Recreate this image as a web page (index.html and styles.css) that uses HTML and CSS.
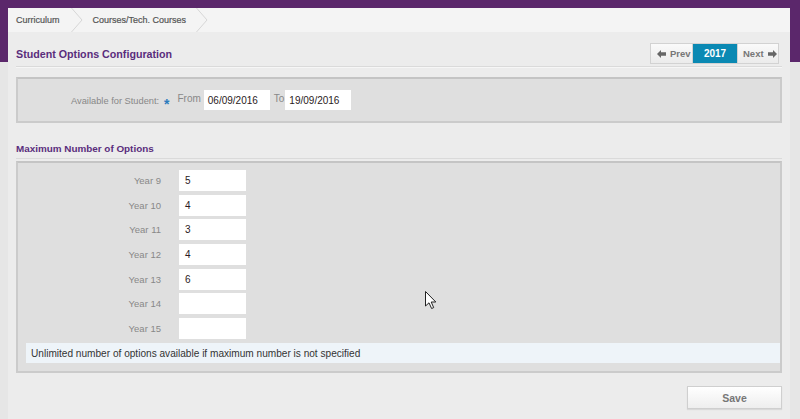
FILE: index.html
```html
<!DOCTYPE html>
<html lang="en">
<head>
<meta charset="utf-8">
<title>Student Options Configuration</title>
<link rel="stylesheet" href="styles.css">
</head>
<body>
<div class="page">
  <nav class="crumbs">
    <span class="crumb first">Curriculum</span>
    <svg class="chev" width="12" height="24" viewBox="0 0 12 24"><polyline points="0.5,0 11,12 0.5,24" fill="none" stroke="#d6d6d6" stroke-width="1"/></svg>
    <span class="crumb">Courses/Tech. Courses</span>
    <svg class="chev" width="12" height="24" viewBox="0 0 12 24"><polyline points="0.5,0 11,12 0.5,24" fill="none" stroke="#d6d6d6" stroke-width="1"/></svg>
  </nav>

  <main class="content">
    <header class="head">
      <h1 class="title">Student Options Configuration</h1>
      <div class="pager">
        <button class="pbtn prev"><svg class="arr" width="9" height="8" viewBox="0 0 9 8"><polygon points="0,4 4,0 4,2.3 9,2.3 9,5.7 4,5.7 4,8" fill="#666"/></svg>Prev</button>
        <button class="pbtn year">2017</button>
        <button class="pbtn next">Next<svg class="arr" width="9" height="8" viewBox="0 0 9 8"><polygon points="9,4 5,0 5,2.3 0,2.3 0,5.7 5,5.7 5,8" fill="#666"/></svg></button>
      </div>
    </header>

    <section class="panel avail">
      <span class="lbl avail-lbl">Available for Student:</span>
      <span class="req">*</span>
      <span class="word">From</span>
      <span class="field date">06/09/2016</span>
      <span class="word to">To</span>
      <span class="field date">19/09/2016</span>
    </section>

    <h2 class="subtitle">Maximum Number of Options</h2>

    <section class="panel maxopts">
      <div class="grid">
        <span class="lbl">Year 9</span><span class="field num">5</span>
        <span class="lbl">Year 10</span><span class="field num">4</span>
        <span class="lbl">Year 11</span><span class="field num">3</span>
        <span class="lbl">Year 12</span><span class="field num">4</span>
        <span class="lbl">Year 13</span><span class="field num">6</span>
        <span class="lbl">Year 14</span><span class="field num"></span>
        <span class="lbl">Year 15</span><span class="field num"></span>
      </div>
      <div class="info">Unlimited number of options available if maximum number is not specified</div>
    </section>

    <div class="actions">
      <button class="save">Save</button>
    </div>
  </main>
</div>
<svg class="cursor" width="13" height="19" viewBox="0 0 13 19"><path d="M0.5,0.5 L0.5,15 L4,11.8 L6.6,17.5 L8.7,16.6 L6.2,11 L10.8,11 Z" fill="#fff" stroke="#222" stroke-width="1" stroke-linejoin="round"/></svg>
</body>
</html>
```

FILE: styles.css
```css
html, body { margin: 0; padding: 0; }
body {
  width: 800px;
  height: 419px;
  overflow: hidden;
  background: linear-gradient(#5b276b 0, #5b276b 62px, #e6e6e6 62px);
  font-family: "Liberation Sans", Arial, sans-serif;
  position: relative;
}
.page {
  margin: 8px 10px 0 8px;
  height: 411px;
  background: #ececec;
  display: flex;
  flex-direction: column;
}
.crumbs {
  height: 24px;
  background: #f4f4f4;
  display: flex;
  align-items: center;
  flex: none;
}
.crumb {
  font-size: 9px;
  color: #555;
  padding: 0 10px 0 10px;
  line-height: 24px;
  -webkit-text-stroke: 0.2px #555;
}
.crumb.first { padding-left: 8px; padding-right: 11px; }
.chev { display: block; flex: none; }

.content {
  padding: 0 8px;
  display: flex;
  flex-direction: column;
}
.head {
  height: 34px;
  display: flex;
  justify-content: space-between;
  align-items: flex-end;
  border-bottom: 1px solid #dadada;
  box-shadow: 0 1px 0 #f6f6f6;
}
.title {
  margin: 0 0 6px 0;
  font-size: 10.7px;
  font-weight: bold;
  color: #5a2d7c;
}
.pager {
  display: flex;
  margin: 0 4px 3px 0;
  box-shadow: 0 0 0 1px #d2d2d2;
}
.pbtn {
  height: 19px;
  border: 0;
  margin: 0;
  font-family: "Liberation Sans", Arial, sans-serif;
  font-size: 9.5px;
  font-weight: bold;
  color: #777;
  background: linear-gradient(#fafafa, #ebebeb);
  display: flex;
  align-items: center;
  gap: 4px;
  padding: 0 6px;
}
.arr { flex: none; display: block; }
.pbtn.prev { width: 42px; border-right: 1px solid #d2d2d2; }
.pbtn.next { width: 41px; border-left: 1px solid #d2d2d2; padding-left: 5px; }
.pbtn.year {
  width: 44px;
  justify-content: center;
  background: #0a89b3;
  color: #fff;
  font-size: 10px;
}

.panel {
  background: #dfdfdf;
  border: 2px solid #cbcbcb;
  border-top-color: #c4c4c4;
  box-sizing: border-box;
}
.avail {
  margin-top: 10px;
  height: 46px;
  display: flex;
  align-items: center;
  padding-left: 53px;
}
.lbl {
  font-size: 9.5px;
  color: #888;
  white-space: nowrap;
}
.avail-lbl {
  padding-top: 2px;
  width: 84px;
  text-align: right;
  font-size: 9.3px;
}
.req {
  color: #2c7bbd;
  font-size: 14px;
  font-weight: bold;
  margin: 7px 8px 0 9px;
}
.word {
  font-size: 10px;
  color: #888;
  margin-right: 3px;
  padding-bottom: 3px;
}
.word.to { margin-right: 1px; }
.field {
  background: #fff;
  box-sizing: border-box;
  font-size: 10px;
  color: #2a1a22;
  padding: 0 4px;
  display: flex;
  align-items: center;
}
.date {
  width: 66px;
  height: 20px;
  margin-right: 4px;
}

.subtitle {
  margin: 20px 0 0 0;
  font-size: 9.9px;
  font-weight: bold;
  color: #5a2d7c;
  height: 14px;
  border-bottom: 1px solid #dadada;
  padding-bottom: 1px;
}
.maxopts {
  margin-top: 2px;
  height: 212px;
  padding: 7px 0 0 8px;
}
.grid {
  display: grid;
  grid-template-columns: 135px 67px;
  grid-auto-rows: 21px;
  row-gap: 3.7px;
  column-gap: 18px;
  align-items: center;
}
.grid .lbl { text-align: right; }
.num {
  height: 21px;
  padding-left: 6px;
}
.info {
  margin-top: 4px;
  height: 20px;
  background: #eef4f9;
  font-size: 10.1px;
  color: #333;
  display: flex;
  align-items: center;
  padding-left: 5px;
}
.actions {
  display: flex;
  justify-content: flex-end;
  margin-top: 13px;
}
.save {
  width: 95px;
  height: 23px;
  border: 1px solid #cfcfcf;
  background: linear-gradient(#ffffff, #eeeeee);
  font-family: "Liberation Sans", Arial, sans-serif;
  font-weight: bold;
  font-size: 10.5px;
  color: #777;
  box-shadow: 0 1px 1px rgba(0,0,0,0.08);
}
.cursor {
  position: absolute;
  left: 425px;
  top: 291px;
}
```
